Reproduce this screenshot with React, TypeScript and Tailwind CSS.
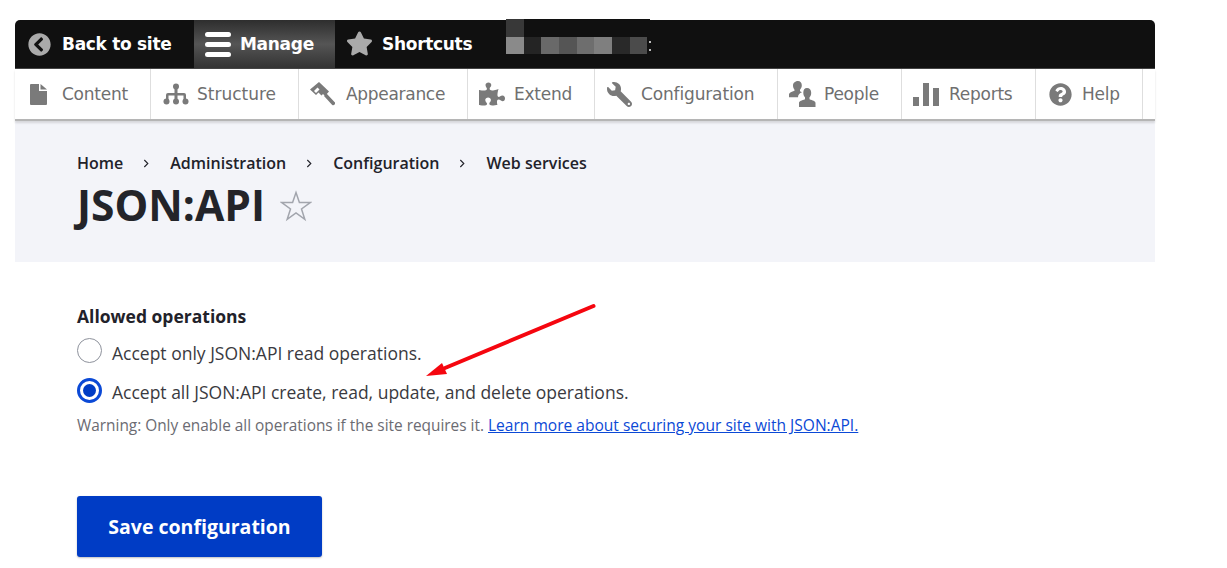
import React from 'react';
import { FaChevronCircleLeft, FaStar, FaPuzzlePiece, FaWrench, FaQuestionCircle } from 'react-icons/fa';

const ContentIcon = () => (
  <svg viewBox="0 0 17 21" className="w-[17px] h-[21px]" fill="#7a7a7a">
    <path d="M0 1a1 1 0 0 1 1-1h8v7h8v13a1 1 0 0 1-1 1H1a1 1 0 0 1-1-1z" />
    <path d="M10.500 0 17 5.500h-6.500z" />
  </svg>
);

const StructureIcon = () => (
  <svg viewBox="0 0 26 22" className="w-[26px] h-[22px]" fill="#7a7a7a">
    <circle cx="13" cy="3.500" r="3" />
    <rect x="11.500" y="5" width="3" height="6" />
    <path d="M3 17v-5a2 2 0 0 1 2-2h16a2 2 0 0 1 2 2v5h-2.500v-4.500h-6V17h-3v-4.500h-6V17z" />
    <circle cx="3.500" cy="18.500" r="3" />
    <circle cx="13" cy="18.500" r="3" />
    <circle cx="22.500" cy="18.500" r="3" />
  </svg>
);

const AppearanceIcon = () => (
  <svg viewBox="0 0 25 25" className="w-[25px] h-[25px]" fill="#7a7a7a">
    <path d="M9 0 19 9.500l-4 4.500-2-2-1.500 1.500L8.500 10.500 6 13 0 7.500z" />
    <path d="M7.500 5.500 4 9l2 2 3.500-3.500z" fill="#fff" />
    <path d="m14 14 2.500-2.500L24.500 20a1.800 1.800 0 0 1-2.500 2.700z" />
  </svg>
);

const PeopleIcon = () => (
  <svg viewBox="0 0 27 26" className="w-[27px] h-[26px]" fill="#7a7a7a">
    <path d="M9 0c2.300 0 3.800 1.800 3.800 4.300 0 2-.8 3.400-1.800 4.400v1.600l2 1c-2.500 1-4 2.500-4 5H0v-3c0-1.500 2.800-2.400 5.500-3.500V8.700C4.500 7.700 4 6.300 4 4.300 4 1.800 6.700 0 9 0z" />
    <path d="M18 7c2.500 0 4.200 2 4.200 4.700 0 2-.7 3.600-1.700 4.600v2c3 1 6 2 6 3.700V26H10v-4c0-1.700 3-2.700 6-3.700v-2c-1-1-1.700-2.600-1.700-4.600C14.300 9 15.500 7 18 7z" />
  </svg>
);

const ReportsIcon = () => (
  <svg viewBox="0 0 26 23" className="w-[26px] h-[23px]" fill="#7a7a7a">
    <rect x="0" y="14" width="6" height="9" />
    <rect x="10" y="0" width="6" height="23" />
    <rect x="20" y="5" width="6" height="18" />
  </svg>
);

const MENU = [
  { label: 'Content', width: 'w-[136px]', icon: <ContentIcon />, iconBox: 'w-[47px] pl-[15px]', track: 'tracking-[-0.25px]' },
  { label: 'Structure', width: 'w-[148px]', icon: <StructureIcon />, iconBox: 'w-[46px] pl-[12px]', track: 'tracking-[0px]' },
  { label: 'Appearance', width: 'w-[169px]', icon: <AppearanceIcon />, iconBox: 'w-[47px] pl-[11px]', track: 'tracking-[-0.3px]' },
  { label: 'Extend', width: 'w-[127px]', icon: <FaPuzzlePiece className="w-[26px] h-[26px] text-[#7a7a7a]" />, iconBox: 'w-[46px] pl-[11px]', track: 'tracking-[-0.25px]' },
  { label: 'Configuration', width: 'w-[183px]', icon: <FaWrench className="w-[25px] h-[25px] text-[#7a7a7a] -scale-x-100" />, iconBox: 'w-[46px] pl-[12px]', track: 'tracking-[-0.15px]' },
  { label: 'People', width: 'w-[124px]', icon: <PeopleIcon />, iconBox: 'w-[46px] pl-[11px]', track: 'tracking-[-0.25px]' },
  { label: 'Reports', width: 'w-[134px]', icon: <ReportsIcon />, iconBox: 'w-[47px] pl-[11px]', track: 'tracking-[-0.25px]' },
  { label: 'Help', width: 'w-[107px]', icon: <FaQuestionCircle className="w-[23px] h-[23px] text-[#7a7a7a]" />, iconBox: 'w-[46px] pl-[13px]', track: 'tracking-[-0.25px]' },
];

const PIXELS = ['bg-[#8a8a8a] w-[18px]', 'bg-[#242424] w-[17px]', 'bg-[#696969] w-[18px]', 'bg-[#555555] w-[18px]', 'bg-[#6e6e6e] w-[17px]', 'bg-[#7f7f7f] w-[18px]', 'bg-[#292929] w-[18px]', 'bg-[#4b4b4b] w-[17px]'];

function Toolbar() {
  return (
    <div className="relative font-['DejaVu_Sans',sans-serif]">
      <div className="h-[49px] bg-[#101010] rounded-t-[5px] flex items-stretch border-b border-[#444] text-white font-bold text-[17px]">
        <a className="w-[179px] flex items-center pl-[13px] gap-[11px] tracking-[-0.3px]">
          <FaChevronCircleLeft className="w-[23px] h-[23px] text-[#aaaaaa]" />
          <span className="pt-px">Back to site</span>
        </a>
        <a className="w-[141px] flex items-center pl-[11px] gap-[9px] tracking-[-0.3px] bg-linear-to-b from-[#2e2e2e] via-[#555] to-[#333]">
          <span className="flex flex-col gap-[5px]">
            <span className="block w-[26px] h-[5px] rounded-full bg-white" />
            <span className="block w-[26px] h-[5px] rounded-full bg-white" />
            <span className="block w-[26px] h-[5px] rounded-full bg-white" />
          </span>
          <span className="pt-px">Manage</span>
        </a>
        <a className="flex items-center pl-[11px] gap-[9px] tracking-[-0.3px]">
          <FaStar className="w-[27px] h-[25px] text-[#aaaaaa] -mt-[2px]" />
          <span className="pt-px">Shortcuts</span>
        </a>
      </div>
      {/* blurred-out user name */}
      <div className="absolute left-[491px] -top-px w-[144px] h-[35px] bg-[#101010]">
        <div className="w-[18px] h-[18px] bg-[#383838]" />
        <div className="flex h-[17px]">
          {PIXELS.map(c => <div key={c} className={c} />)}
        </div>
      </div>
      <div className="absolute left-[634px] top-[21px] flex flex-col gap-[6px]">
        <span className="block w-[2px] h-[2px] bg-[#bbbbbb]" />
        <span className="block w-[2px] h-[2px] bg-[#bbbbbb]" />
      </div>
      <div className="h-[52px] bg-white flex border-b-[2px] border-[#b5b5b5] shadow-[0_2px_2px_rgba(0,0,0,0.12)] text-[#6f6f6f] text-[17px]">
        {MENU.map(m => (
          <a key={m.label} className={`${m.width} flex items-center border-r border-[#dedede]`}>
            <span className={`${m.iconBox} shrink-0 flex items-center`}>{m.icon}</span>
            <span className={`${m.track} pt-px`}>{m.label}</span>
          </a>
        ))}
      </div>
    </div>
  );
}

function Breadcrumb() {
  const items = ['Home', 'Administration', 'Configuration', 'Web services'];
  return (
    <ol className="flex items-center text-[16px] font-semibold text-[#22222a] leading-[20px]">
      {items.map((item, i) => (
        <li key={item} className="flex items-center">
          {i > 0 && (
            <svg viewBox="0 0 8 10" className="w-[7px] h-[9px] mx-[20px]" fill="none" stroke="#22222a" strokeWidth="1.300">
              <path d="m1.500 1 4 4-4 4" />
            </svg>
          )}
          {item}
        </li>
      ))}
    </ol>
  );
}

export default function App() {
  return (
    <div className="w-[1227px] h-[568px] overflow-hidden bg-white pt-5 pl-[15px] relative font-['Open_Sans',sans-serif]">
      <div className="w-[1140px]">
        <Toolbar />
        <div className="h-[141px] bg-[#f3f4f9] pl-[62px] pt-[32px]">
          <Breadcrumb />
          <div className="flex items-center mt-[4px] gap-[15px]">
            <h1 className="text-[42.500px] leading-[56px] font-bold text-[#232429]">JSON:API</h1>
            <svg viewBox="0 0 32 32" className="w-[32px] h-[32px] mt-[2px]" fill="none" stroke="#a2a5ad" strokeWidth="1.500">
              <path d="m16 2.500 3.400 10.100h10.800l-8.700 6.400 3.300 10.300-8.800-6.400-8.800 6.400 3.300-10.300-8.700-6.400h10.800z" />
            </svg>
          </div>
        </div>
        <form className="pl-[62px] pt-[42px]">
          <div className="text-[17.500px] leading-[24px] font-bold text-[#22222a]">Allowed operations</div>
          <label className="flex items-center mt-[8px] h-[28px] text-[17.500px] text-[#3a3a40]">
            <span className="w-[25px] h-[25px] rounded-full border border-[#8e929c] bg-white mr-[10px]" />
            <span className="mt-[6px]">Accept only JSON:API read operations.</span>
          </label>
          <label className="flex items-center mt-[12px] h-[28px] text-[17.500px] text-[#3a3a40]">
            <span className="w-[25px] h-[25px] rounded-full border-[3px] border-[#0b49d6] bg-white mr-[10px] flex items-center justify-center">
              <span className="w-[13px] h-[13px] rounded-full bg-[#003cc5]" />
            </span>
            <span className="mt-[4px]">Accept all JSON:API create, read, update, and delete operations.</span>
          </label>
          <p className="mt-[10px] text-[15.400px] leading-[22px] text-[#6b6b72]">
            Warning: Only enable all operations if the site requires it.{' '}
            <a className="text-[15.550px] text-[#0b49d6] underline">Learn more about securing your site with JSON:API.</a>
          </p>
          <button type="button" className="mt-[59px] w-[245px] h-[61px] rounded-[3px] bg-[#003cc5] text-white text-[19.500px] font-bold shadow-[0_1px_2px_rgba(0,0,0,0.25)]">
            Save configuration
          </button>
        </form>
      </div>
      {/* annotation arrow drawn on the screenshot */}
      <svg className="absolute left-[420px] top-[300px] w-[180px] h-[80px]" viewBox="0 0 180 80" fill="#f5060f">
        <path d="M173.500 6 25 68" stroke="#f5060f" strokeWidth="4" strokeLinecap="round" fill="none" />
        <path d="M6 76 22 63l5 11z" />
      </svg>
    </div>
  );
}
